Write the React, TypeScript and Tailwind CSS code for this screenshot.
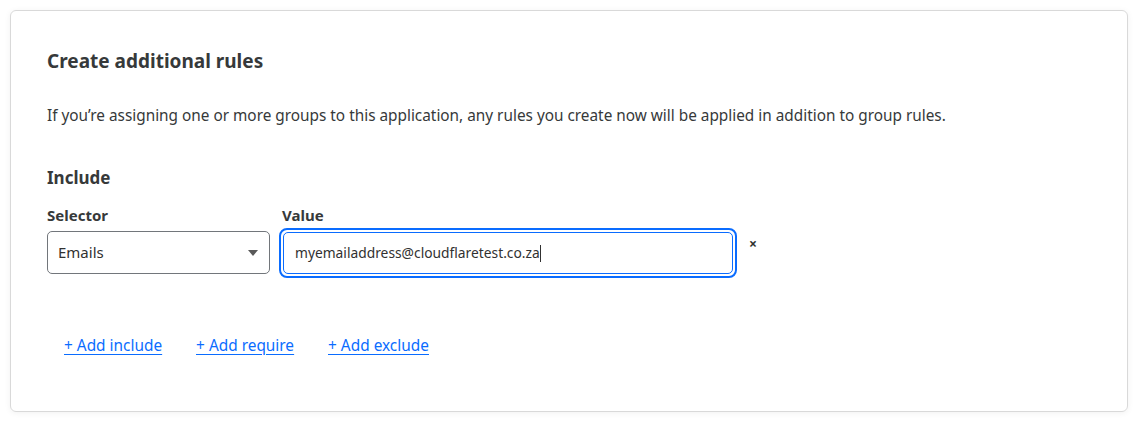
export default function App() {
  return (
    <div className="w-[1143px] h-[434px] bg-white pt-[10px] pl-[10px] font-['Noto_Sans',sans-serif] text-[#313131]">
      <section className="w-[1118px] h-[402px] rounded-[6px] border border-[#d9d9d9] shadow-[0_1px_6px_rgba(0,0,0,0.06)] pl-[36px] pr-[36px] pt-[36px]">
        <h2 className="text-[19px] font-bold leading-[28px] text-[#36393a]">Create additional rules</h2>

        <p className="mt-[28px] text-[15.35px] leading-[24px] text-[#36393a]">
          If you’re assigning one or more groups to this application, any rules you create now will be applied in addition to group rules.
        </p>

        <h3 className="mt-[39px] text-[17px] font-bold leading-[24px] text-[#36393a]">Include</h3>

        <div className="mt-[15px] flex items-start gap-[9px]">
          <div className="flex flex-col">
            <label className="text-[15px] font-bold leading-[20px] text-[#36393a]">Selector</label>
            <div className="mt-[6px] w-[223px] h-[43px] rounded-[5px] border border-[#72767b] flex items-center justify-between pl-[10px] pr-[10px] text-[15px]">
              <span>Emails</span>
              <svg width="10" height="6" viewBox="0 0 10 6" className="mr-[1px]">
                <path d="M0 0 L10 0 L5 6 Z" fill="#595959" />
              </svg>
            </div>
          </div>
          <div className="flex flex-col">
            <label className="text-[15px] font-bold leading-[20px] text-[#36393a] pl-[3px]">Value</label>
            <div className="mt-[3px] w-[458px] h-[50px] rounded-[8px] border-[2px] border-[#0a6cff] p-[2px]">
              <div className="w-full h-full rounded-[5px] border border-[#0a6cff] flex items-center pl-[11px] text-[13.8px] text-[#313131]">
                myemailaddress@cloudflaretest.co.za<span className="w-px h-[17px] bg-[#313131]" />
              </div>
            </div>
          </div>
          <button className="mt-[32px] ml-[3px] text-[14px] font-bold text-[#313131] leading-none">×</button>
        </div>

        <div className="mt-[56px] ml-[17px] flex gap-[34px] text-[15.4px] text-[#0a6cff] underline underline-offset-[3px]">
          <a href="#">+ Add include</a>
          <a href="#">+ Add require</a>
          <a href="#">+ Add exclude</a>
        </div>
      </section>
    </div>
  )
}
